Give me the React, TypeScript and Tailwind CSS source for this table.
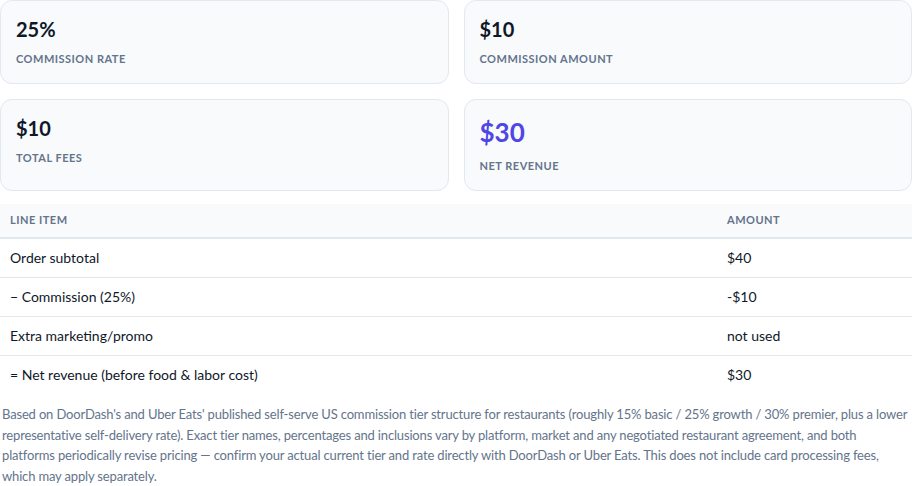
import React from "react";

const font = { fontFamily: "Lato, 'Noto Sans', sans-serif" };

function Card({ value, label, accent = false }: { value: string; label: string; accent?: boolean }) {
  return (
    <div className="rounded-[12px] border border-[#e2e8f0] bg-[#f8fafc] px-[15px] pt-[14px] pb-[16px] flex flex-col gap-[8px]">
      <div
        className={
          accent
            ? "text-[26px] leading-[36px] font-bold text-[#4f46e5]"
            : "text-[20px] leading-[28px] font-bold text-[#0f172a]"
        }
      >
        {value}
      </div>
      <div className="text-[11px] leading-[16px] font-bold uppercase tracking-[0.5px] text-[#64748b]">{label}</div>
    </div>
  );
}

const rows: [string, string][] = [
  ["Order subtotal", "$40"],
  ["\u2212 Commission (25%)", "-$10"],
  ["Extra marketing/promo", "not used"],
  ["= Net revenue (before food & labor cost)", "$30"],
];

export default function App() {
  return (
    <div className="w-[912px] h-[486px] bg-white overflow-hidden" style={font}>
      <div className="grid grid-cols-2 gap-[15px]">
        <Card value="25%" label="Commission rate" />
        <Card value="$10" label="Commission amount" />
        <Card value="$10" label="Total fees" />
        <Card value="$30" label="Net revenue" accent />
      </div>
      <table className="mt-[13px] w-full border-collapse">
        <thead>
          <tr className="bg-[#f8fafc] border-b-2 border-[#e2e8f0]">
            <th className="text-left px-[10px] h-[34px] text-[11px] font-bold uppercase tracking-[0.5px] text-[#64748b]">
              Line item
            </th>
            <th className="text-left px-[10px] w-[195px] h-[34px] text-[11px] font-bold uppercase tracking-[0.5px] text-[#64748b]">
              Amount
            </th>
          </tr>
        </thead>
        <tbody>
          {rows.map(([a, b], i) => (
            <tr key={i} className={i < rows.length - 1 ? "border-b border-[#e5e7eb]" : ""}>
              <td className="px-[10px] py-[9px] text-[14px] leading-[20px] text-[#0f172a]">{a}</td>
              <td className="px-[10px] py-[9px] text-[14px] leading-[20px] text-[#0f172a]">{b}</td>
            </tr>
          ))}
        </tbody>
      </table>
      <p className="mt-[10px] pl-[2px] text-[13px] leading-[20.5px] tracking-[-0.16px] text-[#64748b]">
        Based on DoorDash's and Uber Eats' published self-serve US commission tier structure for restaurants (roughly 15%
        basic / 25% growth / 30% premier, plus a lower representative self-delivery rate). Exact tier names, percentages
        and inclusions vary by platform, market and any negotiated restaurant agreement, and both platforms periodically
        revise pricing — confirm your actual current tier and rate directly with DoorDash or Uber Eats. This does not
        include card processing fees, which may apply separately.
      </p>
    </div>
  );
}
